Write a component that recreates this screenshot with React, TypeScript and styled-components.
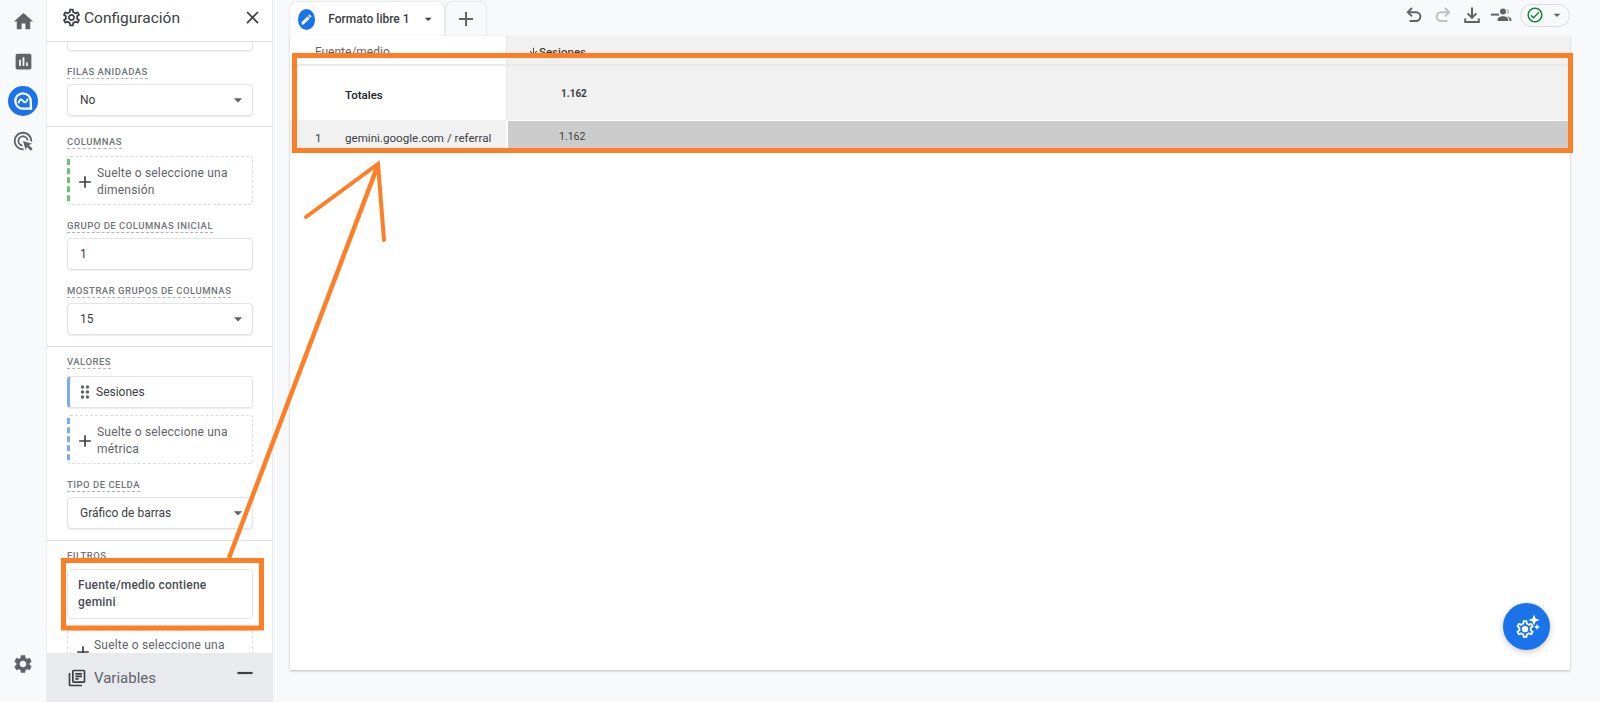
import React from "react";
import styled, { createGlobalStyle } from "styled-components";
import {
  MdHome, MdAssessment, MdAdsClick, MdSettings, MdOutlineSettings, MdClose, MdAdd, MdRemove,
  MdArrowDropDown, MdEdit, MdOutlineLibraryBooks, MdDragIndicator,
  MdOutlineCheckCircle, MdArrowDownward,
} from "react-icons/md";

const Global = createGlobalStyle`
  html, body { margin: 0; padding: 0; height: 702px; overflow: hidden; background: #f8f9fa; }
  body { font-family: Roboto, "Liberation Sans", sans-serif; color: #3c4043; }
  * { box-sizing: border-box; }
`;

const Page = styled.div`
  position: relative;
  display: flex;
  width: 1600px;
  height: 702px;
  background: #f8f9fa;
  overflow: hidden;
`;

const Rail = styled.nav`
  width: 46px;
  flex: none;
  display: flex;
  flex-direction: column;
  align-items: center;
  padding: 6px 0 13px;
  color: #5f6368;
`;
const RailItem = styled.div<{ $active?: boolean }>`
  width: 30px;
  height: 30px;
  margin-bottom: 10px;
  border-radius: 50%;
  display: flex;
  align-items: center;
  justify-content: center;
  background: ${(p) => (p.$active ? "#1a73e8" : "transparent")};
  color: ${(p) => (p.$active ? "#fff" : "#5f6368")};
`;
const RailSpacer = styled.div`
  flex: 1;
`;

const Panel = styled.aside`
  width: 227px;
  flex: none;
  display: flex;
  flex-direction: column;
  height: 702px;
  background: #fff;
  border-left: 1px solid #e8eaed;
  border-right: 1px solid #e8eaed;
`;
const PanelHeader = styled.header`
  height: 42px;
  flex: none;
  display: flex;
  align-items: center;
  padding: 0 9px 6px 14px;
  border-bottom: 1px solid #e0e0e0;
  color: #3c4043;
`;
const PanelTitle = styled.span`
  flex: 1;
  margin-left: 2px;
  font-size: 15.5px;
  color: #3c4043;
`;
const PanelBody = styled.div`
  flex: 1;
  min-height: 0;
  overflow: hidden;
`;
const Section = styled.section`
  padding: 7px 19px 11px 20px;
  border-bottom: 1px solid #e0e0e0;
`;
const FirstSection = styled(Section)`
  padding-top: 0;
  padding-bottom: 10px;
`;
const LastSection = styled(Section)`
  border-bottom: none;
  padding-bottom: 0;
`;
const PartialField = styled.div`
  height: 9px;
  margin-bottom: 13px;
  border: 1px solid #e3e4e6;
  border-top: none;
  border-radius: 0 0 4px 4px;
  box-shadow: 0 1px 1px rgba(60, 64, 67, 0.08);
`;
const Label = styled.div<{ $gap?: boolean; $list?: boolean }>`
  display: table;
  font-size: 9.5px;
  line-height: 12px;
  font-weight: 500;
  letter-spacing: 0.5px;
  color: #70757a;
  text-transform: uppercase;
  border-bottom: 1px dashed #b0b3b8;
  padding: 2px 0 0;
  margin-top: ${(p) => (p.$gap ? "13px" : "0")};
  margin-bottom: ${(p) => (p.$list ? "7px" : "5px")};
`;
const Field = styled.div`
  height: 32px;
  display: flex;
  align-items: center;
  padding: 0 8px 0 12px;
  border: 1px solid #e3e4e6;
  border-radius: 4px;
  box-shadow: 0 1px 1px rgba(60, 64, 67, 0.1);
  font-size: 12px;
  color: #3c4043;
  background: #fff;
  span { flex: 1; }
`;
const Caret = styled(MdArrowDropDown)`
  color: #5f6368;
  flex: none;
  margin-right: -4px;
`;
const DropZone = styled.div<{ $color: string }>`
  height: 49px;
  display: flex;
  align-items: center;
  padding: 2px 10px 0 5px;
  border: 1px dashed #dadce0;
  border-left: 3px dashed ${(p) => p.$color};
  border-radius: 3px;
  font-size: 12px;
  line-height: 17px;
  letter-spacing: 0.2px;
  color: #5f6368;
  gap: 2px;
  svg { flex: none; color: #3c4043; }
`;
const Chip = styled.div`
  height: 32px;
  display: flex;
  align-items: center;
  gap: 1px;
  padding-left: 5px;
  margin-bottom: 7px;
  border: 1px solid #e3e4e6;
  border-left: 3px solid #7baaf0;
  border-radius: 4px;
  box-shadow: 0 1px 1px rgba(60, 64, 67, 0.1);
  font-size: 12px;
  color: #3c4043;
  svg { color: #5f6368; }
`;
const FilterCard = styled.div`
  height: 50px;
  margin: 6px 0 11px;
  padding: 0 10px;
  display: flex;
  align-items: center;
  border: 1px solid #e3e4e6;
  border-radius: 4px;
  font-size: 12px;
  line-height: 17px;
  letter-spacing: 0.2px;
  font-weight: 500;
  color: #4a4d50;
`;
const TailZone = styled.div`
  display: flex;
  gap: 1px;
  height: 40px;
  padding: 6px 6px 0 5px;
  border: 1px dashed #dadce0;
  border-bottom: none;
  font-size: 12px;
  line-height: 17px;
  letter-spacing: 0.2px;
  color: #5f6368;
  svg { flex: none; margin-top: 5px; color: #3c4043; }
`;
const VariablesBar = styled.footer`
  height: 49px;
  flex: none;
  display: flex;
  align-items: center;
  gap: 7px;
  padding: 0 15px 0 21px;
  background: #e8eaed;
  font-size: 15px;
  color: #5f6368;
  margin: 0 -1px;
  span { flex: 1; }
  svg { color: #3c4043; }
`;
const Collapse = styled(MdRemove)`
  margin-top: -10px;
`;

const Main = styled.main`
  flex: 1;
  min-width: 0;
  padding: 0 30px 32px 17px;
  display: flex;
  flex-direction: column;
`;
const TabRow = styled.div`
  height: 36px;
  flex: none;
  display: flex;
  align-items: flex-end;
  gap: 2px;
`;
const ActiveTab = styled.div`
  width: 154px;
  height: 34px;
  display: flex;
  align-items: center;
  padding: 0 8px 0 8px;
  gap: 10px;
  background: #fff;
  border-radius: 6px 6px 0 0;
  box-shadow: 0 0 2px rgba(60, 64, 67, 0.25);
  font-size: 12px;
  font-weight: 500;
  color: #3c4043;
  span { flex: 1; white-space: nowrap; margin-left: 3px; }
`;
const TabBadge = styled.div`
  width: 21px;
  height: 21px;
  border-radius: 50%;
  background: #1a73e8;
  color: #fff;
  display: flex;
  align-items: center;
  justify-content: center;
`;
const AddTab = styled.div`
  width: 40px;
  height: 34px;
  display: flex;
  align-items: center;
  justify-content: center;
  border-radius: 6px 6px 0 0;
  background: #f8f9fa;
  box-shadow: 0 0 2px rgba(60, 64, 67, 0.3);
  color: #5f6368;
`;
const Toolbar = styled.div`
  flex: 1;
  display: flex;
  align-items: center;
  justify-content: flex-end;
  align-self: flex-start;
  height: 30px;
  color: #5f6368;
`;
const ToolIcon = styled.span<{ $dim?: boolean }>`
  width: 29px;
  display: flex;
  justify-content: center;
  color: ${(p) => (p.$dim ? "#bdc1c6" : "#5f6368")};
`;
const StatusPill = styled.div`
  width: 50px;
  height: 23px;
  margin-left: 5px;
  display: flex;
  align-items: center;
  padding-left: 5px;
  gap: 5px;
  border: 1px solid #dadce0;
  border-radius: 12px;
  svg:first-child { color: #188038; }
  svg:last-child { color: #5f6368; }
`;
const Card = styled.div`
  position: relative;
  flex: 1;
  background: #fff;
  box-shadow: 0 1px 2px rgba(60, 64, 67, 0.35);
`;
const Grid = styled.div`
  display: grid;
  grid-template-columns: 216px 1fr;
  grid-template-rows: 30px 54px 33px;
`;
const HeadCell = styled.div<{ $metric?: boolean }>`
  display: flex;
  align-items: flex-start;
  padding: 9px 0 0 ${(p) => (p.$metric ? "21px" : "25px")};
  font-size: ${(p) => (p.$metric ? "11.5px" : "12px")};
  line-height: 14px;
  font-weight: ${(p) => (p.$metric ? 500 : 400)};
  color: ${(p) => (p.$metric ? "#3c4043" : "#5f6368")};
  background: ${(p) => (p.$metric ? "#f1f1f1" : "#fff")};
  border-left: ${(p) => (p.$metric ? "1px solid #e8e8e8" : "none")};
  border-bottom: 2px solid #e8eaed;
  svg { margin: 1px 0 0 0; }
`;
const TotalLabel = styled.div`
  display: flex;
  align-items: center;
  padding: 4px 0 0 55px;
  font-size: 11.5px;
  font-weight: 500;
  color: #202124;
`;
const TotalValue = styled.div`
  display: flex;
  align-items: center;
  padding: 1px 0 0 54px;
  font-size: 10px;
  font-weight: 700;
  color: #3c4043;
  background: #f1f1f1;
  border-left: 1px solid #e8e8e8;
`;
const RowLabel = styled.div`
  display: flex;
  align-items: flex-start;
  padding: 11px 0 0 25px;
  font-size: 11.6px;
  line-height: 14px;
  color: #3c4043;
  background: #f1f1f1;
  b { font-weight: 400; width: 30px; }
  span { white-space: nowrap; }
`;
const BarCell = styled.div`
  display: flex;
  align-items: flex-start;
  padding: 9px 0 0 51px;
  margin: 1px 0 0 2px;
  font-size: 10.5px;
  line-height: 13px;
  color: #3c4043;
  background: #cccccc;
`;
const Fab = styled.div`
  position: absolute;
  right: 20px;
  bottom: 20px;
  width: 47px;
  height: 47px;
  border-radius: 50%;
  background: #1a73e8;
  box-shadow: 0 2px 6px rgba(60, 64, 67, 0.3);
  display: flex;
  align-items: center;
  justify-content: center;
`;
const Annotation = styled.svg`
  position: absolute;
  left: 0;
  top: 0;
  pointer-events: none;
`;

function ExploreIcon() {
  return (
    <svg width="22" height="22" viewBox="0 0 22 22" fill="none" stroke="#fff" strokeWidth="2.3">
      <path d="M19 18.7 H11 A7.7 7.7 0 1 1 18.7 11 Z" />
      <path d="M6.6 12.6 C8 8.6 9.6 9 11 11 C12.4 13 14 13.2 15.4 9.4" strokeWidth="1.9" strokeLinecap="round" />
    </svg>
  );
}

function UndoIcon() {
  return (
    <svg width="20" height="20" viewBox="0 0 20 20" fill="none" stroke="currentColor" strokeWidth="1.9">
      <path d="M8 3 L3.8 7.2 L8 11.4" />
      <path d="M3.8 7.2 H12 A4.4 4.4 0 0 1 12 16 H5.5" />
    </svg>
  );
}

function RedoIcon() {
  return (
    <svg width="20" height="20" viewBox="0 0 20 20" fill="none" stroke="currentColor" strokeWidth="1.9">
      <path d="M12 3 L16.2 7.2 L12 11.4" />
      <path d="M16.2 7.2 H8 A4.4 4.4 0 0 0 8 16 H14.5" />
    </svg>
  );
}

function DownloadIcon() {
  return (
    <svg width="20" height="20" viewBox="0 0 20 20" fill="none" stroke="currentColor" strokeWidth="2">
      <path d="M10 2.5 V12.5" />
      <path d="M5.6 8.4 L10 12.8 L14.4 8.4" />
      <path d="M3.2 13.5 V17 H16.8 V13.5" />
    </svg>
  );
}

function ShareIcon() {
  return (
    <svg width="22" height="16" viewBox="0 0 22 16" fill="currentColor">
      <rect x="1" y="6.6" width="8" height="2" />
      <circle cx="13" cy="4.6" r="3" />
      <path d="M7.6 14 V12.4 C7.6 10.4 10.8 9.2 13 9.2 C15.2 9.2 18.2 10.4 18.2 12.4 V14 Z" />
      <path d="M16.8 1.9 A3 3 0 0 1 16.8 7.4 A4.4 4.4 0 0 0 16.8 1.9 Z" />
      <path d="M17.2 9.4 C19.4 9.7 21.4 10.7 21.4 12.4 V14 H19.4 V12.4 C19.4 11.2 18.5 10.2 17.2 9.4 Z" />
    </svg>
  );
}

function AiGear() {
  return (
    <svg width="30" height="30" viewBox="0 0 30 30" fill="#fff">
      <g transform="translate(2.5 6.5) scale(0.88)">
        <path
          fillRule="evenodd"
          d="M19.43 12.98c.04-.32.07-.64.07-.98s-.03-.66-.07-.98l2.11-1.65c.19-.15.24-.42.12-.64l-2-3.46c-.12-.22-.39-.3-.61-.22l-2.49 1c-.52-.4-1.08-.73-1.69-.98l-.38-2.65C14.46 2.18 14.25 2 14 2h-4c-.25 0-.46.18-.49.42l-.38 2.65c-.61.25-1.17.59-1.69.98l-2.49-1c-.23-.09-.49 0-.61.22l-2 3.46c-.13.22-.07.49.12.64l2.11 1.65c-.04.32-.07.65-.07.98s.03.66.07.98l-2.11 1.65c-.19.15-.24.42-.12.64l2 3.46c.12.22.39.3.61.22l2.49-1c.52.4 1.08.73 1.69.98l.38 2.65c.03.24.24.42.49.42h4c.25 0 .46-.18.49-.42l.38-2.65c.61-.25 1.17-.59 1.69-.98l2.49 1c.23.09.49 0 .61-.22l2-3.46c.12-.22.07-.49-.12-.64l-2.11-1.65zM17.45 11.27c.04.31.05.52.05.73s-.02.43-.05.73l-.14 1.13.89.7 1.08.84-.7 1.21-1.27-.51-1.04-.42-.9.68c-.43.32-.84.56-1.25.73l-1.06.43-.16 1.13-.2 1.35h-1.4l-.19-1.35-.16-1.13-1.06-.43c-.43-.18-.83-.41-1.23-.71l-.91-.7-1.06.43-1.27.51-.7-1.21 1.08-.84.89-.7-.14-1.13c-.03-.31-.05-.54-.05-.74s.02-.43.05-.73l.14-1.13-.89-.7-1.08-.84.7-1.21 1.27.51 1.04.42.9-.68c.43-.32.84-.56 1.25-.73l1.06-.43.16-1.13.2-1.35h1.39l.19 1.35.16 1.13 1.06.43c.43.18.83.41 1.23.71l.91.7 1.06-.43 1.27-.51.7 1.21-1.07.85-.89.7.14 1.13z"
        />
        <circle cx="12" cy="12" r="3.6" />
      </g>
      <path d="M22 2.5 L23.6 6.4 L27.5 8 L23.6 9.6 L22 13.5 L20.4 9.6 L16.5 8 L20.4 6.4 Z" />
      <path d="M25 12 L25.9 14.1 L28 15 L25.9 15.9 L25 18 L24.1 15.9 L22 15 L24.1 14.1 Z" />
    </svg>
  );
}

function Select({ value }: { value: string }) {
  return (
    <Field>
      <span>{value}</span>
      <Caret size={20} />
    </Field>
  );
}

export default function App() {
  return (
    <Page>
      <Global />
      <Rail>
        <RailItem><MdHome size={23} /></RailItem>
        <RailItem><MdAssessment size={21} /></RailItem>
        <RailItem $active><ExploreIcon /></RailItem>
        <RailItem><MdAdsClick size={22} /></RailItem>
        <RailSpacer />
        <RailItem><MdSettings size={22} /></RailItem>
      </Rail>

      <Panel>
        <PanelHeader>
          <MdOutlineSettings size={21} />
          <PanelTitle>Configuración</PanelTitle>
          <MdClose size={21} />
        </PanelHeader>
        <PanelBody>
          <FirstSection>
            <PartialField />
            <Label>Filas anidadas</Label>
            <Select value="No" />
          </FirstSection>
          <Section>
            <Label $list>Columnas</Label>
            <DropZone $color="#6fbf73">
              <MdAdd size={20} />
              <span>Suelte o seleccione una dimensión</span>
            </DropZone>
            <Label $gap>Grupo de columnas inicial</Label>
            <Field>1</Field>
            <Label $gap>Mostrar grupos de columnas</Label>
            <Select value="15" />
          </Section>
          <Section>
            <Label $list>Valores</Label>
            <Chip>
              <MdDragIndicator size={20} />
              Sesiones
            </Chip>
            <DropZone $color="#7baaf0">
              <MdAdd size={20} />
              <span>Suelte o seleccione una métrica</span>
            </DropZone>
            <Label $gap>Tipo de celda</Label>
            <Select value="Gráfico de barras" />
          </Section>
          <LastSection>
            <Label>Filtros</Label>
            <FilterCard>Fuente/medio contiene gemini</FilterCard>
            <TailZone>
              <MdAdd size={20} />
              <span>Suelte o seleccione una</span>
            </TailZone>
          </LastSection>
        </PanelBody>
        <VariablesBar>
          <MdOutlineLibraryBooks size={20} />
          <span>Variables</span>
          <Collapse size={26} />
        </VariablesBar>
      </Panel>

      <Main>
        <TabRow>
          <ActiveTab>
            <TabBadge><MdEdit size={13} /></TabBadge>
            <span>Formato libre 1</span>
            <MdArrowDropDown size={20} />
          </ActiveTab>
          <AddTab><MdAdd size={24} /></AddTab>
          <Toolbar>
            <ToolIcon><UndoIcon /></ToolIcon>
            <ToolIcon $dim><RedoIcon /></ToolIcon>
            <ToolIcon><DownloadIcon /></ToolIcon>
            <ToolIcon><ShareIcon /></ToolIcon>
            <StatusPill>
              <MdOutlineCheckCircle size={18} />
              <MdArrowDropDown size={16} />
            </StatusPill>
          </Toolbar>
        </TabRow>
        <Card>
          <Grid>
            <HeadCell>Fuente/medio</HeadCell>
            <HeadCell $metric><MdArrowDownward size={11} />Sesiones</HeadCell>
            <TotalLabel>Totales</TotalLabel>
            <TotalValue>1.162</TotalValue>
            <RowLabel><b>1</b><span>gemini.google.com / referral</span></RowLabel>
            <BarCell>1.162</BarCell>
          </Grid>
          <Fab><AiGear /></Fab>
        </Card>
      </Main>

      <Annotation width="1600" height="702" viewBox="0 0 1600 702" fill="none" stroke="#fe7e26">
        <rect x="294.5" y="55.5" width="1276" height="95" strokeWidth="5" />
        <rect x="63.5" y="560.5" width="198" height="67.5" strokeWidth="5" />
        <path d="M229 558 L378 165" strokeWidth="4.5" />
        <path d="M306 217 L378 164 L384 240" strokeWidth="4" strokeLinecap="round" />
      </Annotation>
    </Page>
  );
}
